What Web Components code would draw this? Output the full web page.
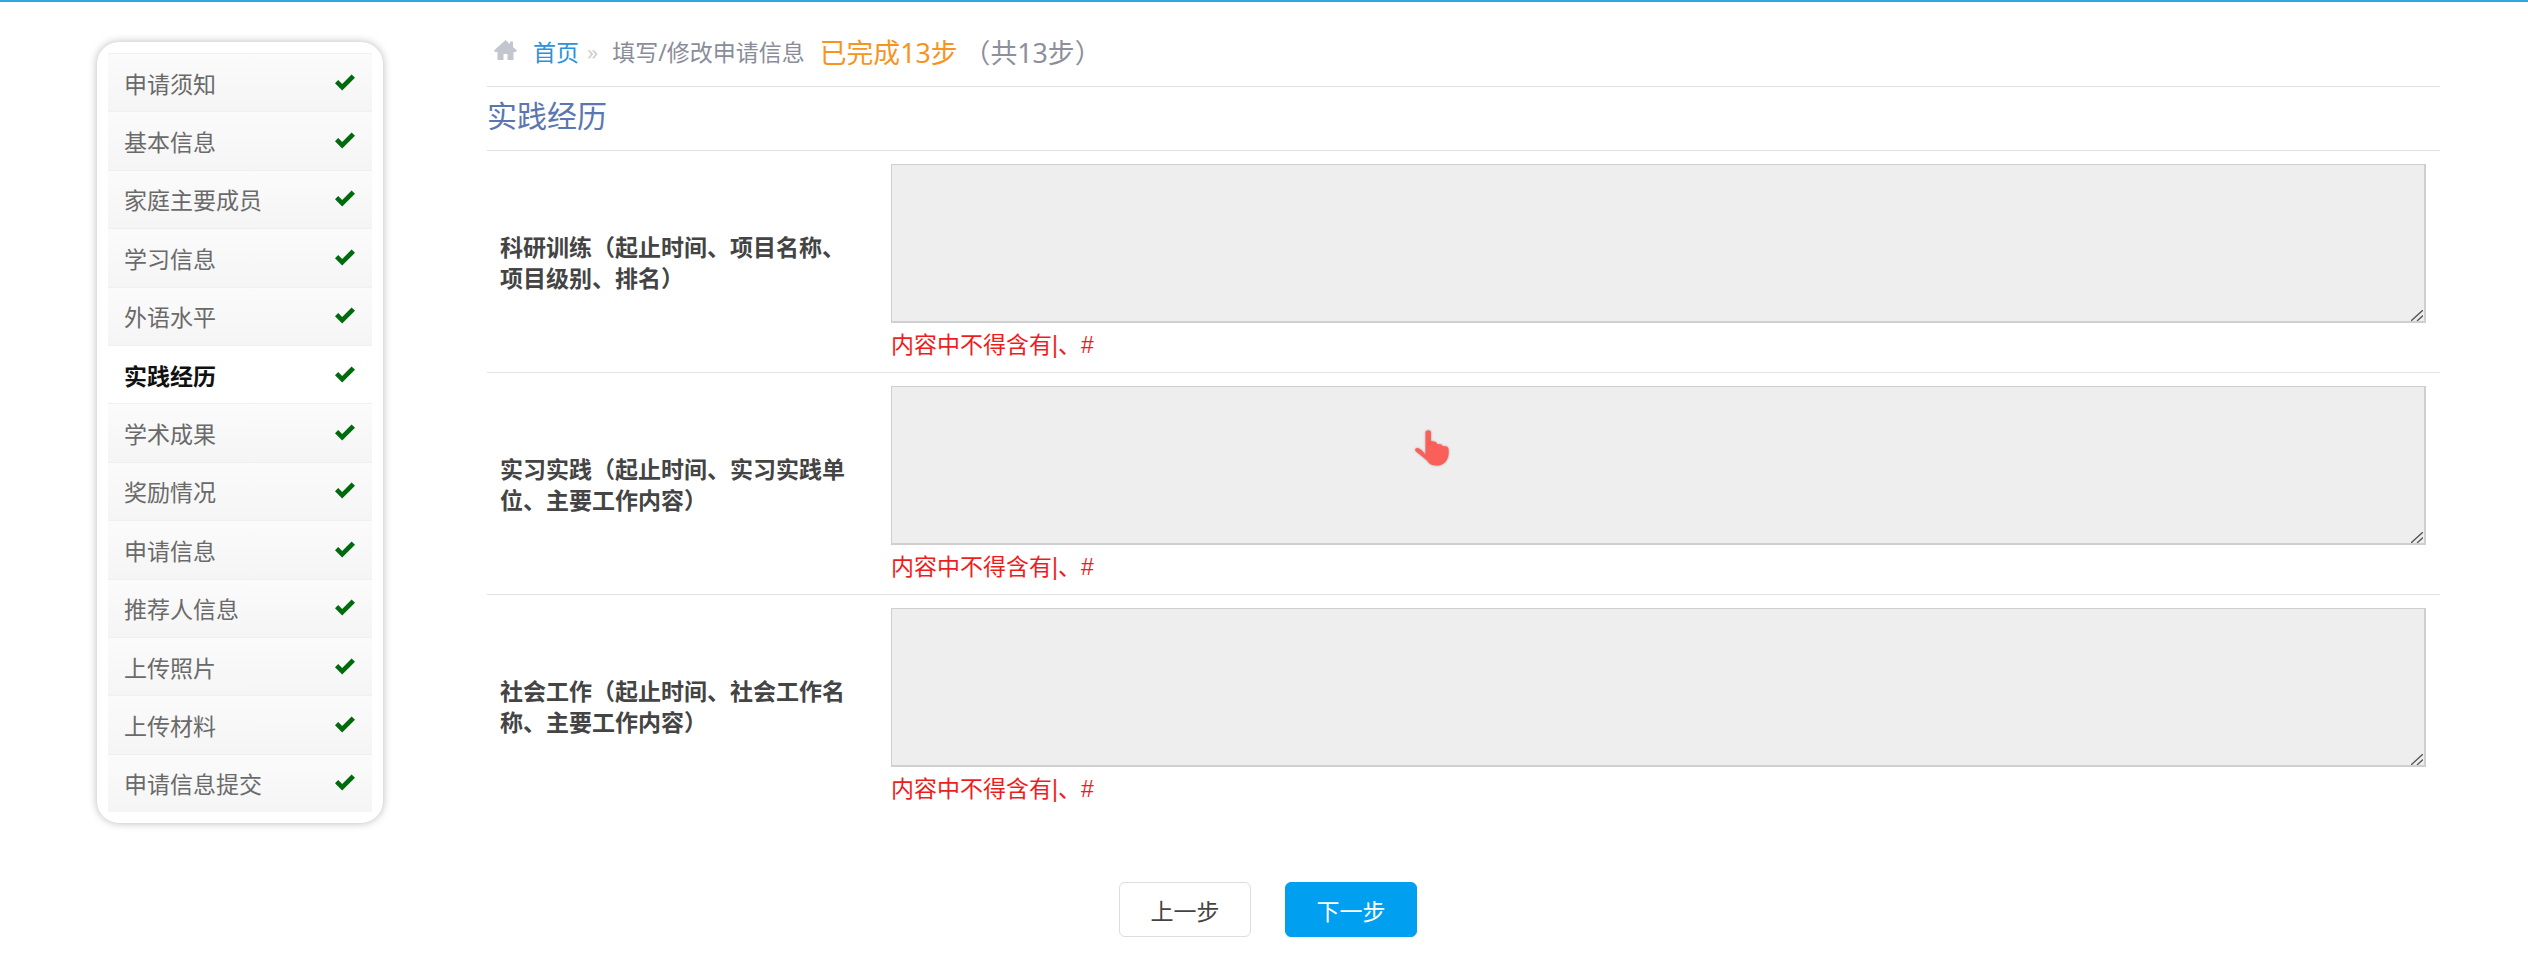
<!DOCTYPE html>
<html lang="zh">
<head>
<meta charset="utf-8">
<title>实践经历</title>
<style>
  html, body { margin: 0; background: #fff; }
  body { font-family: "Noto Sans", "Noto Sans CJK SC", sans-serif; }
</style>
</head>
<body>
<apply-page>
  <side-nav slot="side">
    <nav-item>申请须知</nav-item>
    <nav-item>基本信息</nav-item>
    <nav-item>家庭主要成员</nav-item>
    <nav-item>学习信息</nav-item>
    <nav-item>外语水平</nav-item>
    <nav-item active>实践经历</nav-item>
    <nav-item>学术成果</nav-item>
    <nav-item>奖励情况</nav-item>
    <nav-item>申请信息</nav-item>
    <nav-item>推荐人信息</nav-item>
    <nav-item>上传照片</nav-item>
    <nav-item>上传材料</nav-item>
    <nav-item>申请信息提交</nav-item>
  </side-nav>
  <crumb-bar></crumb-bar>
  <section-title>实践经历</section-title>
  <form-row>科研训练（起止时间、项目名称、项目级别、排名）</form-row>
  <form-row>实习实践（起止时间、实习实践单位、主要工作内容）</form-row>
  <form-row last>社会工作（起止时间、社会工作名称、主要工作内容）</form-row>
  <step-buttons></step-buttons>
</apply-page>
<hand-cursor></hand-cursor>

<script>
  // 页面整体：左侧导航 + 右侧内容
  class ApplyPage extends HTMLElement {
    constructor() {
      super();
      this.attachShadow({ mode: 'open' });
      this.shadowRoot.innerHTML = `
        <style>
          :host {
            display: flex;
            align-items: flex-start;
            border-top: 2px solid #2ea7e0;
            height: 978px;
            overflow: hidden;
          }
          .side { margin: 40px 0 0 97px; width: 286px; flex: none; }
          .main { margin-left: 104px; width: 1953px; flex: none; }
        </style>
        <div class="side"><slot name="side"></slot></div>
        <div class="main"><slot></slot></div>
      `;
    }
  }

  class SideNav extends HTMLElement {
    constructor() {
      super();
      this.attachShadow({ mode: 'open' });
      this.shadowRoot.innerHTML = `
        <style>
          :host {
            display: block;
            box-sizing: border-box;
            height: 781px;
            padding: 11px;
            background: #fff;
            border-radius: 22px;
            box-shadow: 0 0 8px rgba(0, 0, 0, .28);
          }
        </style>
        <slot></slot>
      `;
    }
  }

  class NavItem extends HTMLElement {
    constructor() {
      super();
      this.attachShadow({ mode: 'open' });
      this.shadowRoot.innerHTML = `
        <style>
          :host {
            display: flex;
            align-items: center;
            justify-content: space-between;
            box-sizing: border-box;
            height: 58.4px;
            padding: 0 17px 0 16px;
            font-size: 23px;
            color: #6a6a6a;
            border-top: 1px solid #f0f0f0;
            background: linear-gradient(#fbfbfb, #f5f5f5);
          }
          :host([active]) { background: #fff; color: #111; font-weight: 700; }
          svg { width: 20px; height: 17px; margin-top: -1px; flex: none; }
        </style>
        <span><slot></slot></span>
        <svg viewBox="0 0 20 17"><path fill="#006b0c" d="M0 9.2 3.2 6l4 3.9L16.600 .6 20 3.800 7.200 16.600z"/></svg>
      `;
    }
  }

  class CrumbBar extends HTMLElement {
    constructor() {
      super();
      this.attachShadow({ mode: 'open' });
      this.shadowRoot.innerHTML = `
        <style>
          :host {
            display: flex;
            align-items: center;
            box-sizing: border-box;
            height: 85px;
            padding: 14px 0 0 7px;
            border-bottom: 1px solid #e2e2e2;
            color: #8a8d99;
            font-size: 23px;
            white-space: nowrap;
          }
          svg { width: 23px; height: 20px; margin: -3px 16px 0 0; flex: none; }
          a { color: #2b92dc; text-decoration: none; }
          .sep { color: #cfcfcf; margin: 0 14px 0 8px; font-size: 22px; }
          .done { color: #f7931e; font-size: 26.800px; margin: 0 6px 0 15px; }
          .total { font-size: 26.800px; color: #8d8f9c; }
        </style>
        <svg viewBox="0 0 23 20"><path fill="#c3c6cf" d="M11.500 0 0 10.500 1.200 12H3.500v8h6v-6h4v6h6v-8h2.300l1.200-1.500-4-3.500V1.500h-3v2.700z"/></svg>
        <a>首页</a><span class="sep">»</span><span>填写/修改申请信息</span>
        <span class="done">已完成13步</span><span class="total">（共13步）</span>
      `;
    }
  }

  class SectionTitle extends HTMLElement {
    constructor() {
      super();
      this.attachShadow({ mode: 'open' });
      this.shadowRoot.innerHTML = `
        <style>
          :host {
            display: flex;
            align-items: center;
            box-sizing: border-box;
            height: 64px;
            border-bottom: 1px solid #e2e2e2;
            color: #5b76b0;
            font-size: 30px;
            padding-bottom: 9px;
          }
        </style>
        <slot></slot>
      `;
    }
  }

  class FormRow extends HTMLElement {
    constructor() {
      super();
      this.attachShadow({ mode: 'open' });
      this.shadowRoot.innerHTML = `
        <style>
          :host {
            display: grid;
            grid-template-columns: 404px 1fr;
            align-items: center;
            box-sizing: border-box;
            height: 222px;
            padding: 13px 14px 0 0;
            border-bottom: 1px solid #e2e2e2;
          }
          :host([last]) { border-bottom-color: transparent; }
          .label {
            padding: 0 41px 0 13px;
            margin-bottom: 10px;
            font-size: 23px;
            line-height: 31px;
            font-weight: 700;
            color: #444;
          }
          .field { align-self: start; }
          .box { position: relative; }
          textarea {
            display: block;
            box-sizing: border-box;
            width: 100%;
            height: 159px;
            margin: 0;
            background: #eee;
            border: 2px solid #cfcfcf;
            border-width: 1px 2px 2px 1px;
            resize: none;
          }
          /* 右下角拖拽手柄 */
          .grip { position: absolute; right: 3px; bottom: 2px; width: 12px; height: 11px; pointer-events: none; }
          .tip {
            font-family: "Liberation Sans", "Noto Sans CJK SC", sans-serif;
            font-size: 23px;
            line-height: 30px;
            margin-top: 7px;
            color: #f01c1c;
            white-space: nowrap;
          }
        </style>
        <div class="label"><slot></slot></div>
        <div class="field">
          <div class="box">
            <textarea disabled></textarea>
            <svg class="grip" viewBox="0 0 12 11"><path stroke="#555" stroke-width="1.300" fill="none" d="M0 11 12 0M6 11l6-5.500"/></svg>
          </div>
          <div class="tip">内容中不得含有|、#</div>
        </div>
      `;
    }
  }

  class StepButtons extends HTMLElement {
    constructor() {
      super();
      this.attachShadow({ mode: 'open' });
      this.shadowRoot.innerHTML = `
        <style>
          :host {
            display: flex;
            gap: 34px;
            margin: 65px 0 0 632px;
          }
          button {
            box-sizing: border-box;
            width: 132px;
            height: 55px;
            padding: 0;
            border: 1px solid #ddd;
            border-radius: 6px;
            background: #fff;
            color: #444;
            font: 23px "Noto Sans", "Noto Sans CJK SC", sans-serif;
          }
          .next { background: #009ff0; border-color: #009ff0; color: #fff; }
        </style>
        <button>上一步</button>
        <button class="next">下一步</button>
      `;
    }
  }

  // 截图里的鼠标手形，浮在文本框上
  class HandCursor extends HTMLElement {
    constructor() {
      super();
      this.attachShadow({ mode: 'open' });
      this.shadowRoot.innerHTML = `
        <style>
          :host { position: absolute; left: 1414px; top: 430px; width: 36px; height: 38px; }
          svg { display: block; width: 100%; height: 100%; filter: drop-shadow(0 0 1px rgba(0, 0, 0, .3)); }
        </style>
        <svg viewBox="0 0 36 38">
          <path fill="#fa5f5a" d="M11.500 2.500c0-3 5.500-3 5.500 0V11l5 1 1 2 4.500.5 1 1.500 4.500.5 1.500 2c.5 5 0 8-1.500 11-2 4-6 6-10 6-5 0-7.500-1-10-5L1.500 21c-1-2 .5-3.500 2.500-3l3.500 2 4 4.500z"/>
        </svg>
      `;
    }
  }

  customElements.define('apply-page', ApplyPage);
  customElements.define('side-nav', SideNav);
  customElements.define('nav-item', NavItem);
  customElements.define('crumb-bar', CrumbBar);
  customElements.define('section-title', SectionTitle);
  customElements.define('form-row', FormRow);
  customElements.define('step-buttons', StepButtons);
  customElements.define('hand-cursor', HandCursor);
</script>
</body>
</html>
